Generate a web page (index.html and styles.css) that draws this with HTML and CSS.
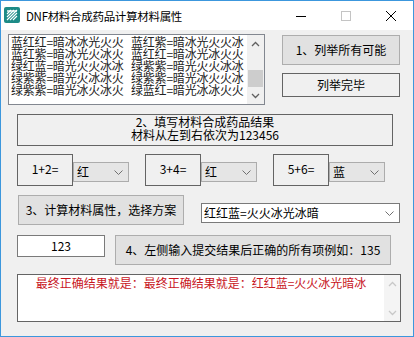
FILE: index.html
```html
<!DOCTYPE html>
<html lang="zh-CN">
<head>
    <meta charset="UTF-8">
    <title>DNF材料合成药品计算材料属性</title>
    <link rel="stylesheet" href="styles.css">
</head>
<body>
    <div class="window">
        <div class="titlebar">
            <svg class="app-icon" width="16" height="16" viewBox="0 0 16 16">
                <rect x="0" y="0" width="16" height="16" rx="2" fill="#1d8b87"/>
                <path d="M3 4 H13" stroke="#fff" stroke-width="1.4"/>
                <path d="M3 7 L7 3 M3 10 L10 3 M3 13 L13 3 M6 13 L13 6 M9 13 L13 9" stroke="#fff" stroke-width="1.1"/>
            </svg>
            <span class="title">DNF材料合成药品计算材料属性</span>
            <div class="caption-btns">
                <span class="cap"><svg width="10" height="10" viewBox="0 0 10 10"><path d="M0 5.5 H10" stroke="#000" stroke-width="1"/></svg></span>
                <span class="cap"><svg width="10" height="10" viewBox="0 0 10 10"><rect x="0.5" y="0.5" width="9" height="9" fill="none" stroke="#c4c4c4" stroke-width="1"/></svg></span>
                <span class="cap"><svg width="10" height="10" viewBox="0 0 10 10"><path d="M0 0 L10 10 M10 0 L0 10" stroke="#000" stroke-width="1"/></svg></span>
            </div>
        </div>

        <div class="client">
            <div class="row row-list">
                <div class="listbox">
                    <div class="list-items">
                        <div class="list-line"><span class="col">蓝红红=暗冰冰光火火</span><span>蓝红紫=暗冰光火火冰</span></div>
                        <div class="list-line"><span class="col">蓝红紫=暗冰光火冰火</span><span>蓝红红=暗冰光冰火火</span></div>
                        <div class="list-line"><span class="col">绿红蓝=暗光火火冰冰</span><span>绿紫紫=暗光火火冰冰</span></div>
                        <div class="list-line"><span class="col">绿紫紫=暗光火冰冰火</span><span>绿紫紫=暗光冰火火冰</span></div>
                        <div class="list-line"><span class="col">绿紫紫=暗光冰火冰火</span><span>绿蓝红=暗光冰冰火火</span></div>
                    </div>
                    <div class="vscroll">
                        <span class="sb-arrow"><svg width="9" height="6" viewBox="0 0 9 6"><path d="M1 5 L4.5 1.5 L8 5" fill="none" stroke="#606060" stroke-width="1.3"/></svg></span>
                        <span class="sb-track"><span class="sb-thumb"></span></span>
                        <span class="sb-arrow"><svg width="9" height="6" viewBox="0 0 9 6"><path d="M1 1 L4.5 4.5 L8 1" fill="none" stroke="#606060" stroke-width="1.3"/></svg></span>
                    </div>
                </div>
                <div class="side-btns">
                    <div class="btn btn-enum">1、列举所有可能</div>
                    <div class="frame frame-done">列举完毕</div>
                </div>
            </div>

            <div class="frame label-box">
                <div>2、填写材料合成药品结果</div>
                <div>材料从左到右依次为123456</div>
            </div>

            <div class="row row-pairs">
                <div class="pair">
                    <div class="frame sum-box">1+2=</div>
                    <div class="combo">红<svg class="chev" width="9" height="5" viewBox="0 0 9 5"><path d="M0.5 0.5 L4.5 4.5 L8.5 0.5" fill="none" stroke="#707070"/></svg></div>
                </div>
                <div class="pair">
                    <div class="frame sum-box">3+4=</div>
                    <div class="combo">红<svg class="chev" width="9" height="5" viewBox="0 0 9 5"><path d="M0.5 0.5 L4.5 4.5 L8.5 0.5" fill="none" stroke="#707070"/></svg></div>
                </div>
                <div class="pair">
                    <div class="frame sum-box">5+6=</div>
                    <div class="combo">蓝<svg class="chev" width="9" height="5" viewBox="0 0 9 5"><path d="M0.5 0.5 L4.5 4.5 L8.5 0.5" fill="none" stroke="#707070"/></svg></div>
                </div>
            </div>

            <div class="row row-calc">
                <div class="btn btn-calc">3、计算材料属性，选择方案</div>
                <div class="combo combo-wide">红红蓝=火火冰光冰暗<svg class="chev" width="9" height="5" viewBox="0 0 9 5"><path d="M0.5 0.5 L4.5 4.5 L8.5 0.5" fill="none" stroke="#707070"/></svg></div>
            </div>

            <div class="row row-submit">
                <div class="input-box">123</div>
                <div class="btn btn-submit">4、左侧输入提交结果后正确的所有项例如：135</div>
            </div>

            <div class="result-box">
                <div class="result-text">最终正确结果就是：最终正确结果就是：红红蓝=火火冰光暗冰</div>
                <div class="vscroll vscroll-off">
                    <span class="sb-arrow"><svg width="9" height="6" viewBox="0 0 9 6"><path d="M1 5 L4.5 1.5 L8 5" fill="none" stroke="#c8c8c8" stroke-width="1.3"/></svg></span>
                    <span class="sb-track"></span>
                    <span class="sb-arrow"><svg width="9" height="6" viewBox="0 0 9 6"><path d="M1 1 L4.5 4.5 L8 1" fill="none" stroke="#c8c8c8" stroke-width="1.3"/></svg></span>
                </div>
            </div>
        </div>
    </div>
</body>
</html>
```

FILE: styles.css
```css
* {
    box-sizing: border-box;
}
body {
    margin: 0;
    font-family: "Noto Sans CJK SC", "Liberation Sans", sans-serif;
    font-size: 12px;
    color: #000;
}
.window {
    width: 414px;
    height: 337px;
    border: 1px solid #3c97dd;
    background: #f0f0f0;
    overflow: hidden;
    display: flex;
    flex-direction: column;
}
.titlebar {
    height: 29px;
    flex-shrink: 0;
    background: #fff;
    display: flex;
    align-items: center;
    padding-left: 3px;
}
.app-icon {
    margin-top: -1px;
}
.title {
    margin-left: 6px;
    font-size: 11.5px;
    letter-spacing: -0.3px;
}
.caption-btns {
    margin-left: auto;
    display: flex;
}
.cap {
    width: 45px;
    height: 29px;
    display: flex;
    align-items: center;
    justify-content: center;
}
.cap svg {
    display: block;
}

/* client area */
.client {
    flex: 1;
    line-height: 12px;
}
.row {
    display: flex;
}
.frame {
    border: 1px solid #646464;
    background: #f0f0f0;
    display: flex;
    align-items: center;
    justify-content: center;
}
.btn {
    background: #e1e1e1;
    border: 1px solid #adadad;
    display: flex;
    align-items: center;
    justify-content: center;
}

/* list */
.row-list {
    margin-top: 4px;
    margin-left: 7px;
}
.listbox {
    width: 257px;
    height: 71px;
    border: 1px solid #828790;
    background: #fff;
    display: flex;
}
.list-items {
    flex: 1;
    padding: 1px 0 0 2px;
    overflow: hidden;
    color: #222;
}
.list-line {
    height: 12px;
    white-space: nowrap;
    letter-spacing: -0.2px;
}
.col {
    display: inline-block;
    width: 120px;
}
.vscroll {
    width: 17px;
    background: #f0f0f0;
    display: flex;
    flex-direction: column;
}
.sb-arrow {
    height: 17px;
    display: flex;
    align-items: center;
    justify-content: center;
}
.sb-track {
    flex: 1;
    display: flex;
    flex-direction: column;
    justify-content: flex-end;
    padding: 0 1px;
}
.sb-thumb {
    height: 17px;
    background: #cdcdcd;
}
.side-btns {
    margin-left: 17px;
    width: 118px;
}
.btn-enum {
    margin-top: 1px;
    height: 30px;
}
.frame-done {
    margin-top: 8px;
    height: 24px;
}

/* label */
.label-box {
    margin: 9px 0 0 16px;
    width: 376px;
    height: 32px;
    flex-direction: column;
    justify-content: flex-start;
    padding-top: 0;
    line-height: 13px;
}

/* pairs */
.row-pairs {
    margin: 8px 0 0 16px;
    gap: 16px;
}
.pair {
    display: flex;
}
.sum-box {
    width: 56px;
    height: 32px;
    padding-bottom: 2px;
}
.combo {
    margin-top: 8px;
    width: 56px;
    height: 20px;
    background: #e5e5e5;
    border: 1px solid #acacac;
    display: flex;
    align-items: center;
    padding-left: 3px;
}
.chev {
    margin-left: auto;
    margin-right: 5px;
}

/* calc row */
.row-calc {
    margin: 9px 0 0 17px;
}
.btn-calc {
    width: 166px;
    height: 30px;
}
.combo-wide {
    margin-left: 17px;
    width: 199px;
    background: #fff;
    border-color: #7a7a7a;
    padding-left: 2px;
}

/* submit row */
.row-submit {
    margin: 10px 0 0 16px;
}
.input-box {
    width: 88px;
    height: 22px;
    background: #fff;
    border: 1px solid #7a7a7a;
    display: flex;
    align-items: center;
    justify-content: center;
}
.btn-submit {
    margin-left: 10px;
    width: 276px;
    height: 30px;
}

/* result */
.result-box {
    margin: 9px 0 0 16px;
    width: 384px;
    height: 48px;
    border: 1px solid #646464;
    background: #fff;
    display: flex;
}
.result-text {
    flex: 1;
    text-align: center;
    color: #c8161e;
    padding-top: 2px;
    white-space: nowrap;
}
.vscroll-off {
    width: 16px;
    background: #f4f4f4;
}
```
